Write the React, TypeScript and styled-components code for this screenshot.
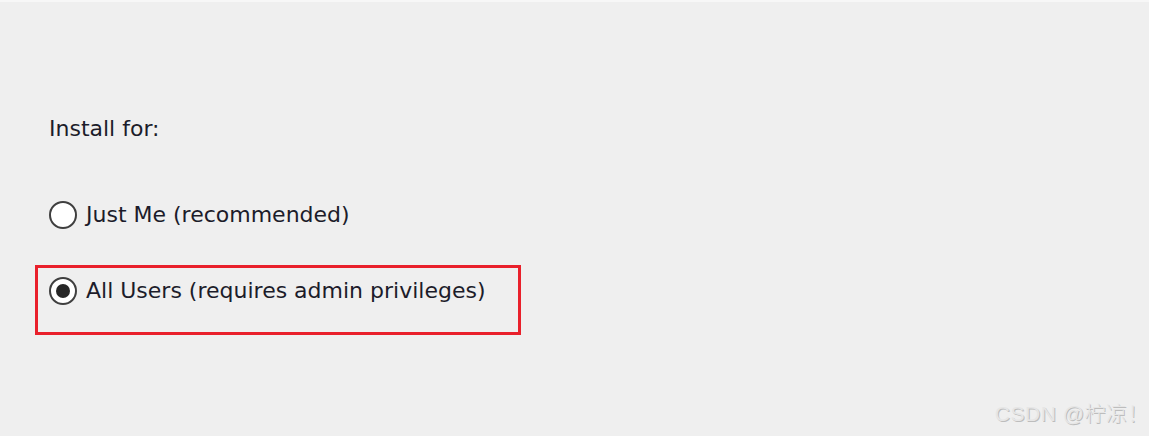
import React, { useState } from "react";
import styled, { createGlobalStyle } from "styled-components";

const GlobalStyle = createGlobalStyle`
  * {
    box-sizing: border-box;
    margin: 0;
    padding: 0;
  }
  html, body, #root {
    width: 100%;
    height: 100%;
    background: #efefef;
    overflow: hidden;
  }
`;

const Page = styled.div`
  position: relative;
  width: 1149px;
  height: 436px;
  background: #efefef;
  border-top: 2px solid #f7f7f7;
  padding: 113px 0 0 35px;
  font-family: "DejaVu Sans", Tahoma, sans-serif;
  color: #1c1c2a;
`;

const Label = styled.div`
  font-size: 22px;
  line-height: 28px;
  padding-left: 14px;
  margin-bottom: 49px;
`;

const Options = styled.div`
  display: flex;
  flex-direction: column;
  gap: 28px;
`;

const Option = styled.label<{ $highlight?: boolean }>`
  display: flex;
  align-items: ${(p) => (p.$highlight ? "flex-start" : "center")};
  gap: 9px;
  width: 486px;
  height: ${(p) => (p.$highlight ? "70px" : "45px")};
  padding: ${(p) => (p.$highlight ? "9px 0 0 11px" : "0 0 0 11px")};
  border: 3px solid ${(p) => (p.$highlight ? "#e9202b" : "transparent")};
  font-size: 22px;
  line-height: 28px;
  cursor: default;
`;

const Dot = styled.span<{ $checked: boolean }>`
  flex: none;
  width: 28px;
  height: 28px;
  border-radius: 50%;
  border: 2px solid #3f3f3f;
  background: #fff;
  display: flex;
  align-items: center;
  justify-content: center;

  &::after {
    content: "";
    width: 14px;
    height: 14px;
    border-radius: 50%;
    background: #262626;
    display: ${(p) => (p.$checked ? "block" : "none")};
  }
`;

const Watermark = styled.div`
  position: absolute;
  right: 0;
  bottom: 9px;
  font-family: "Liberation Sans", "Noto Sans CJK SC", sans-serif;
  font-size: 21px;
  font-weight: 300;
  color: #e6e6e6;
  text-shadow: 1px 1px 0 #bdbdbd;
  letter-spacing: 0.5px;
`;

const options = [
  { id: "me", text: "Just Me (recommended)" },
  { id: "all", text: "All Users (requires admin privileges)" },
];

const App: React.FC = () => {
  const [choice, setChoice] = useState("all");
  return (
    <>
      <GlobalStyle />
      <Page>
        <Label>Install for:</Label>
        <Options>
          {options.map((o) => (
            <Option
              key={o.id}
              $highlight={o.id === "all"}
              onClick={() => setChoice(o.id)}
            >
              <Dot $checked={choice === o.id} />
              <span>{o.text}</span>
            </Option>
          ))}
        </Options>
        <Watermark>CSDN @柠凉！</Watermark>
      </Page>
    </>
  );
};

export default App;
